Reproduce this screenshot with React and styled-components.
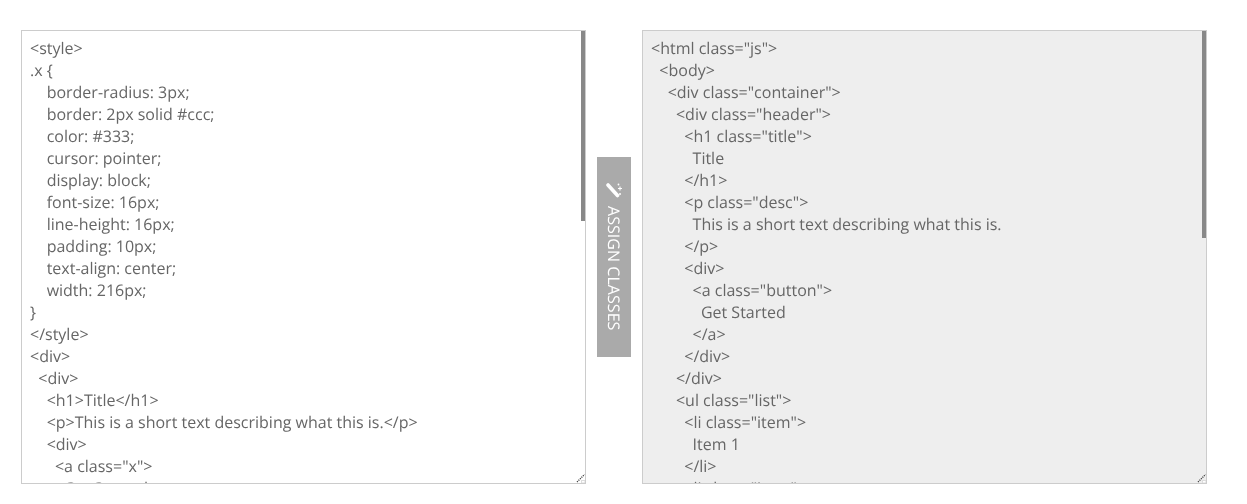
import React from "react";
import styled, { createGlobalStyle } from "styled-components";

const Global = createGlobalStyle`
  html, body { margin: 0; padding: 0; background: #fff; }
`;

const Page = styled.div`
  display: flex;
  align-items: center;
  gap: 11px;
  padding: 30px 0 20px 21px;
  font-family: "Open Sans", sans-serif;
`;

const Pane = styled.div`
  position: relative;
  flex: none;
  width: 565px;
  height: 454px;
`;

const Code = styled.textarea`
  display: block;
  box-sizing: border-box;
  width: 100%;
  height: 100%;
  margin: 0;
  padding: 6px 8px;
  border: 1px solid #ccc;
  border-radius: 0;
  outline: none;
  resize: none;
  overflow: hidden;
  white-space: pre;
  font-family: "Open Sans", sans-serif;
  font-size: 16px;
  line-height: 22px;
  color: #666;
  text-rendering: geometricPrecision;
  will-change: transform;
  background: ${(p) => (p.$output ? "#eee" : "#fff")};
`;

const Thumb = styled.div`
  position: absolute;
  top: 1px;
  right: 1px;
  width: 4px;
  height: ${(p) => p.$height}px;
  background: #888;
`;

const Grip = styled.svg`
  position: absolute;
  right: 1px;
  bottom: 1px;
  width: 12px;
  height: 12px;
`;

const AssignButton = styled.button`
  flex: none;
  box-sizing: border-box;
  width: 34px;
  height: 200px;
  margin: 0;
  padding: 25px 0 0;
  border: 0;
  display: flex;
  flex-direction: column;
  align-items: center;
  gap: 8px;
  background: #aaa;
  color: #fff;
  font-family: "Open Sans", sans-serif;
  font-size: 16px;
  line-height: 34px;
  text-rendering: geometricPrecision;
  will-change: transform;
  cursor: pointer;
`;

const Label = styled.span`
  writing-mode: vertical-rl;
  white-space: nowrap;
  letter-spacing: 0.05px;
`;

const WandIcon = styled.svg`
  flex: none;
  width: 18px;
  height: 16px;
`;

const leftSource = `<style>
.x {
    border-radius: 3px;
    border: 2px solid #ccc;
    color: #333;
    cursor: pointer;
    display: block;
    font-size: 16px;
    line-height: 16px;
    padding: 10px;
    text-align: center;
    width: 216px;
}
</style>
<div>
  <div>
    <h1>Title</h1>
    <p>This is a short text describing what this is.</p>
    <div>
      <a class="x">
        Get Started
      </a>
    </div>
  </div>
</div>`;

const rightSource = `<html class="js">
  <body>
    <div class="container">
      <div class="header">
        <h1 class="title">
          Title
        </h1>
        <p class="desc">
          This is a short text describing what this is.
        </p>
        <div>
          <a class="button">
            Get Started
          </a>
        </div>
      </div>
      <ul class="list">
        <li class="item">
          Item 1
        </li>
        <li class="item">
          Item 2
        </li>
      </ul>
    </div>
  </body>
</html>`;

function ResizeGrip() {
  return (
    <Grip viewBox="0 0 12 12">
      <path d="M4 11 11.6 3.4" stroke="#444" strokeWidth="1.3" strokeDasharray="1.2 0.9" fill="none" />
      <rect x="8.5" y="9.5" width="3.5" height="2.5" fill="#fff" stroke="#ddd" strokeWidth="1" />
    </Grip>
  );
}

function Wand() {
  return (
    <WandIcon viewBox="0 0 18 16">
      <path d="M3 3 12.5 13.5" stroke="#fff" strokeWidth="3.6" strokeLinecap="round" fill="none" />
      <path d="M15 4.5v4M13 6.5h4" stroke="#fff" strokeWidth="1.1" fill="none" />
      <circle cx="13.5" cy="2.5" r="0.9" fill="#fff" />
      <circle cx="15" cy="12" r="1" fill="#fff" />
    </WandIcon>
  );
}

export default function App() {
  return (
    <>
      <Global />
      <Page>
        <Pane>
          <Code readOnly spellCheck={false} defaultValue={leftSource} />
          <Thumb $height={190} />
          <ResizeGrip />
        </Pane>
        <AssignButton type="button">
          <Wand />
          <Label>ASSIGN CLASSES</Label>
        </AssignButton>
        <Pane>
          <Code $output readOnly spellCheck={false} defaultValue={rightSource} />
          <Thumb $height={207} />
          <ResizeGrip />
        </Pane>
      </Page>
    </>
  );
}
